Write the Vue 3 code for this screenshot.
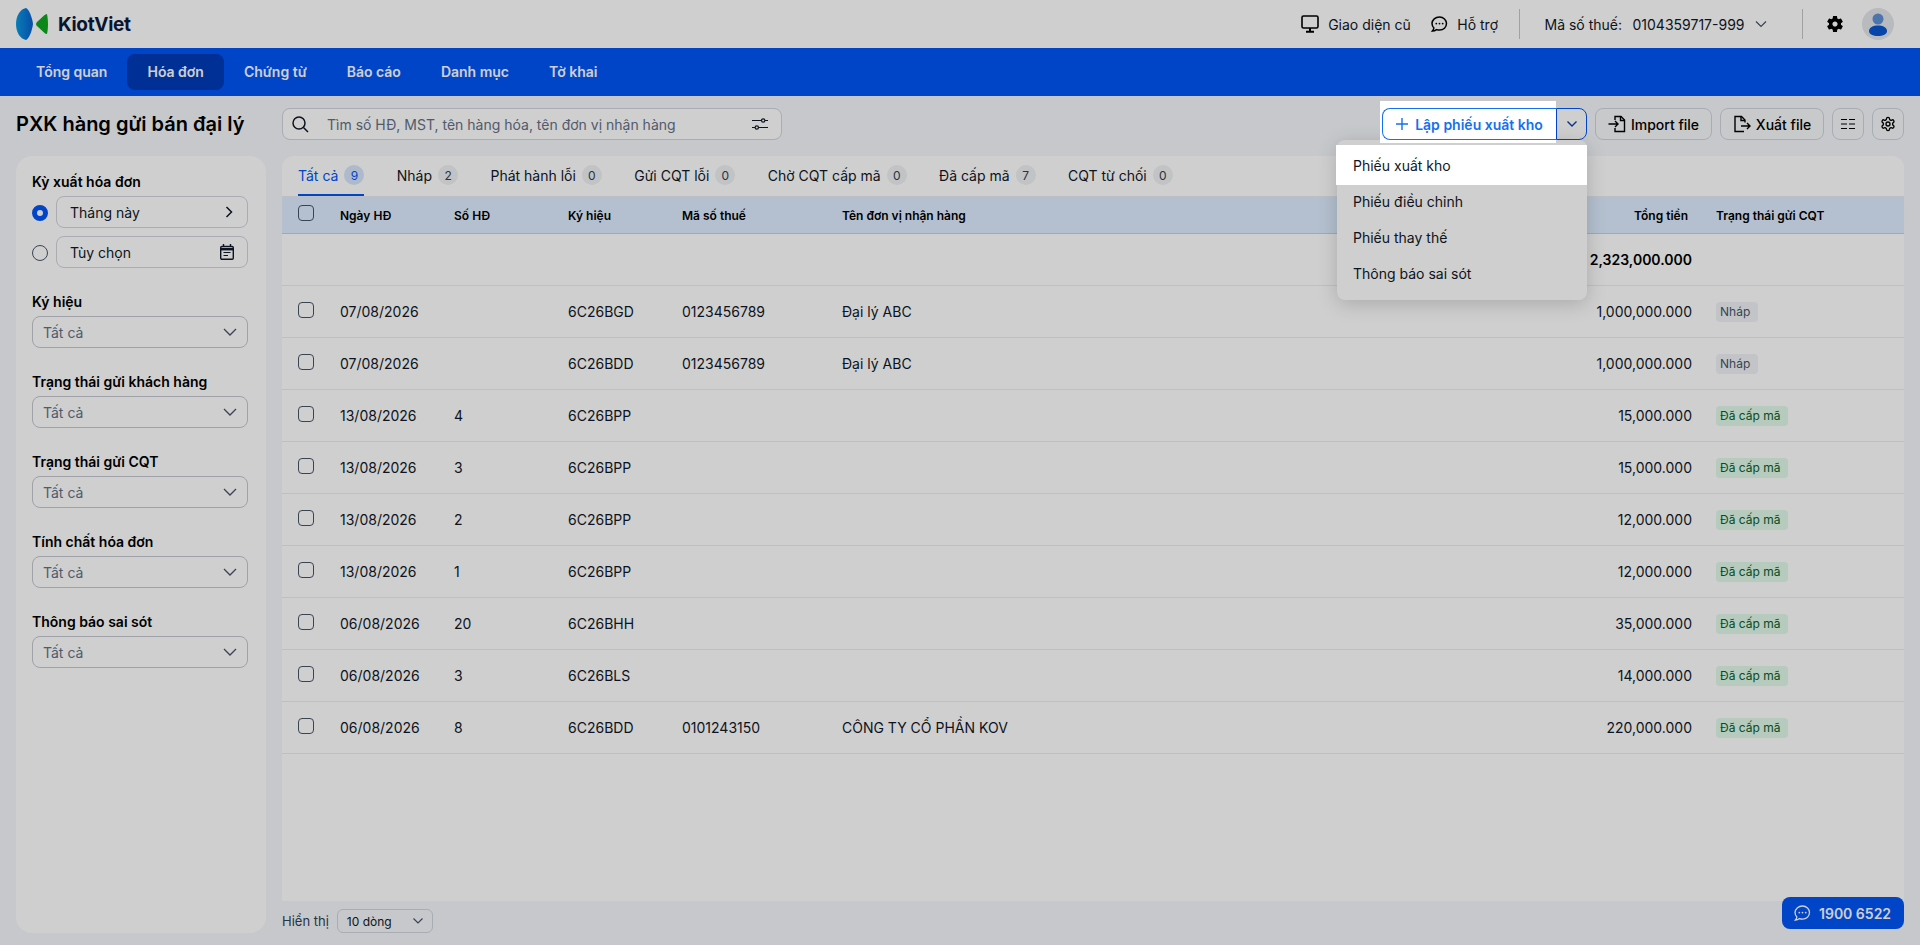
<script setup>
const navItems = ['Tổng quan', 'Hóa đơn', 'Chứng từ', 'Báo cáo', 'Danh mục', 'Tờ khai']
const tabs = [
  { label: 'Tất cả', count: 9, active: true },
  { label: 'Nháp', count: 2 },
  { label: 'Phát hành lỗi', count: 0 },
  { label: 'Gửi CQT lỗi', count: 0 },
  { label: 'Chờ CQT cấp mã', count: 0 },
  { label: 'Đã cấp mã', count: 7 },
  { label: 'CQT từ chối', count: 0 }
]
const filters = ['Ký hiệu', 'Trạng thái gửi khách hàng', 'Trạng thái gửi CQT', 'Tính chất hóa đơn', 'Thông báo sai sót']
const rows = [
  { date: '07/08/2026', no: '', sym: '6C26BGD', tax: '0123456789', name: 'Đại lý ABC', total: '1,000,000.000', status: 'Nháp' },
  { date: '07/08/2026', no: '', sym: '6C26BDD', tax: '0123456789', name: 'Đại lý ABC', total: '1,000,000.000', status: 'Nháp' },
  { date: '13/08/2026', no: '4', sym: '6C26BPP', tax: '', name: '', total: '15,000.000', status: 'Đã cấp mã' },
  { date: '13/08/2026', no: '3', sym: '6C26BPP', tax: '', name: '', total: '15,000.000', status: 'Đã cấp mã' },
  { date: '13/08/2026', no: '2', sym: '6C26BPP', tax: '', name: '', total: '12,000.000', status: 'Đã cấp mã' },
  { date: '13/08/2026', no: '1', sym: '6C26BPP', tax: '', name: '', total: '12,000.000', status: 'Đã cấp mã' },
  { date: '06/08/2026', no: '20', sym: '6C26BHH', tax: '', name: '', total: '35,000.000', status: 'Đã cấp mã' },
  { date: '06/08/2026', no: '3', sym: '6C26BLS', tax: '', name: '', total: '14,000.000', status: 'Đã cấp mã' },
  { date: '06/08/2026', no: '8', sym: '6C26BDD', tax: '0101243150', name: 'CÔNG TY CỔ PHẦN KOV', total: '220,000.000', status: 'Đã cấp mã' }
]
const menu = ['Phiếu xuất kho', 'Phiếu điều chỉnh', 'Phiếu thay thế', 'Thông báo sai sót']
</script>

<template>
  <div class="app">
    <header class="top">
      <div class="brand">
        <svg class="logo" width="34" height="32" viewBox="0 0 34 32">
          <defs>
            <linearGradient id="lg" x1="0" y1="0" x2="1" y2="0">
              <stop offset="0" stop-color="#0a9be0" />
              <stop offset="1" stop-color="#0a5fd0" />
            </linearGradient>
          </defs>
          <path d="M10 0C4 1 0 8 0 16s4 15 10 16c3-1 6-9 7-16C16 9 13 1 10 0z" fill="url(#lg)" />
          <path d="M31 6c-1 0-2 .5-3 1.500l-7 6.500c-1.200 1.100-1.200 3 0 4.100l7 6.500c1 1 2 1.500 3 1.500 .6-2.500 1-6 1-9.500S31.600 8.500 31 6z" fill="#0fa81e" />
        </svg>
        <span class="brand-name">KiotViet</span>
      </div>
      <div class="top-right">
        <a class="top-link">
          <svg width="18" height="18" viewBox="0 0 18 18" fill="none" stroke="#000" stroke-width="1.600"><rect x="1" y="1" width="16" height="12" rx="1.500" /><path d="M9 13v3.500M5 16.800h8" stroke-width="2" /></svg>
          Giao diện cũ
        </a>
        <a class="top-link second">
          <svg width="18" height="18" viewBox="0 0 18 18" fill="none" stroke="#000" stroke-width="1.500"><path d="M9.500 2C5.400 2 2 4.900 2 8.600c0 1.700.7 3.200 1.900 4.400-.2 1.200-.8 2.200-1.500 3 1.700 0 3.100-.6 4.100-1.400.9.300 1.900.5 3 .5 4 0 7-2.900 7-6.500S13.500 2 9.500 2z" /><circle cx="6.300" cy="8.600" r=".9" fill="#000" stroke="none" /><circle cx="9.500" cy="8.600" r=".9" fill="#000" stroke="none" /><circle cx="12.700" cy="8.600" r=".9" fill="#000" stroke="none" /></svg>
          Hỗ trợ
        </a>
        <span class="vline"></span>
        <span class="tax-label">Mã số thuế:</span>
        <span class="tax-value">0104359717-999</span>
        <svg class="tax-chev" width="12" height="8" viewBox="0 0 12 8" fill="none" stroke="#475467" stroke-width="1.200"><path d="M1 1.500l5 5 5-5" /></svg>
        <span class="vline v2"></span>
        <svg class="cog" width="20" height="20" viewBox="0 0 24 24" fill="#000"><path d="M19.140 12.940c.04-.3.06-.61.06-.94 0-.32-.02-.64-.07-.94l2.030-1.580c.18-.14.23-.41.12-.61l-1.920-3.320c-.12-.22-.37-.29-.59-.22l-2.390.96c-.5-.38-1.030-.7-1.620-.94l-.36-2.540c-.04-.24-.24-.41-.48-.41h-3.840c-.24 0-.43.17-.47.41l-.36 2.540c-.59.24-1.130.57-1.620.94l-2.390-.96c-.22-.08-.47 0-.59.22L2.740 8.870c-.12.21-.08.47.12.61l2.030 1.580c-.05.3-.09.63-.09.94s.02.64.07.94l-2.030 1.580c-.18.14-.23.41-.12.61l1.920 3.320c.12.22.37.29.59.22l2.390-.96c.5.38 1.030.7 1.620.94l.36 2.540c.05.24.24.41.48.41h3.840c.24 0 .44-.17.47-.41l.36-2.540c.59-.24 1.130-.56 1.620-.94l2.390.96c.22.08.47 0 .59-.22l1.920-3.320c.12-.22.07-.47-.12-.61l-2.010-1.580zM12 15.100c-1.710 0-3.100-1.390-3.100-3.100s1.390-3.100 3.100-3.100 3.100 1.390 3.100 3.100-1.390 3.100-3.100 3.100z" /></svg>
        <span class="avatar">
          <svg width="20" height="24" viewBox="0 0 20 24"><circle cx="10" cy="7" r="5.500" fill="#5f8fd6" /><path d="M1 19c0-3.500 4-5.500 9-5.500s9 2 9 5.500-4 5-9 5-9-1.500-9-5z" fill="#0a55d0" /></svg>
        </span>
      </div>
    </header>

    <nav class="nav">
      <a v-for="(n, i) in navItems" :key="n" class="nav-item" :class="{ on: i === 1 }">{{ n }}</a>
    </nav>

    <section class="toolbar">
      <h1 class="title">PXK hàng gửi bán đại lý</h1>
      <div class="search">
        <svg width="18" height="18" viewBox="0 0 18 18" fill="none" stroke="#101828" stroke-width="1.500"><circle cx="8" cy="8" r="6" /><path d="M12.500 12.500L17 17" /></svg>
        <span class="ph">Tìm số HĐ, MST, tên hàng hóa, tên đơn vị nhận hàng</span>
        <svg class="tune" width="16" height="14" viewBox="0 0 16 14" fill="none" stroke="#101828" stroke-width="1.200"><path d="M0 3.500h9.500M13 3.500h3M0 10.500h3M6.500 10.500H16" /><circle cx="11.200" cy="3.500" r="1.700" /><circle cx="4.800" cy="10.500" r="1.700" /></svg>
      </div>
      <div class="actions">
        <div class="spot">
          <button class="btn-main">
            <svg width="12" height="12" viewBox="0 0 12 12" stroke="#1570ef" stroke-width="1.400"><path d="M6 0v12M0 6h12" /></svg>
            Lập phiếu xuất kho
          </button>
        </div>
        <button class="btn-drop">
          <svg width="12" height="8" viewBox="0 0 12 8" fill="none" stroke="#0a3f9e" stroke-width="1.400"><path d="M1.500 1.500L6 6l4.500-4.500" /></svg>
        </button>
        <button class="btn import">
          <svg width="18" height="18" viewBox="0 0 18 18" fill="none" stroke="#000" stroke-width="1.400"><path d="M7 5V1.500h6l3.500 3.500v11.500H7V13" /><path d="M0.500 9h9M7 6l3 3-3 3" /><path d="M12.500 1.500V5.500h4" /></svg>
          Import file
        </button>
        <button class="btn export">
          <svg width="18" height="18" viewBox="0 0 18 18" fill="none" stroke="#000" stroke-width="1.400"><path d="M11 16.500H2V1.500h6.500L12 5v2.500" /><path d="M8 1.500V5.500h4" /><path d="M8 11h9M14 8l3 3-3 3" /></svg>
          Xuất file
        </button>
        <button class="btn square">
          <svg width="14" height="10" viewBox="0 0 14 10" stroke="#000" stroke-width="1.100"><path d="M0 .5h6M8 .5h6M0 5h6M8 5h6M0 9.500h6M8 9.500h6" /></svg>
        </button>
        <button class="btn square last">
          <svg width="16" height="16" viewBox="0 0 24 24" fill="none" stroke="#000" stroke-width="2"><path d="M12.220 2h-.44a2 2 0 0 0-2 2v.18a2 2 0 0 1-1 1.730l-.43.25a2 2 0 0 1-2 0l-.15-.08a2 2 0 0 0-2.730.730l-.22.380a2 2 0 0 0 .73 2.730l.15.100a2 2 0 0 1 1 1.720v.510a2 2 0 0 1-1 1.740l-.15.090a2 2 0 0 0-.73 2.730l.22.380a2 2 0 0 0 2.730.730l.15-.08a2 2 0 0 1 2 0l.43.250a2 2 0 0 1 1 1.730V20a2 2 0 0 0 2 2h.44a2 2 0 0 0 2-2v-.18a2 2 0 0 1 1-1.730l.43-.25a2 2 0 0 1 2 0l.15.08a2 2 0 0 0 2.730-.73l.22-.39a2 2 0 0 0-.73-2.730l-.15-.08a2 2 0 0 1-1-1.740v-.5a2 2 0 0 1 1-1.740l.15-.09a2 2 0 0 0 .73-2.730l-.22-.38a2 2 0 0 0-2.730-.73l-.15.08a2 2 0 0 1-2 0l-.43-.25a2 2 0 0 1-1-1.730V4a2 2 0 0 0-2-2z" /><circle cx="12" cy="12" r="3" /></svg>
        </button>
        <ul class="menu">
          <li v-for="(m, i) in menu" :key="m" class="menu-item" :class="{ lit: i === 0 }">{{ m }}</li>
        </ul>
      </div>
    </section>

    <main class="content">
      <aside class="side">
        <div class="group">
          <label class="lbl">Kỳ xuất hóa đơn</label>
          <div class="period">
            <span class="radio on"></span>
            <div class="field">
              <span>Tháng này</span>
              <svg width="8" height="12" viewBox="0 0 8 12" fill="none" stroke="#101828" stroke-width="1.500"><path d="M1.500 1l5 5-5 5" /></svg>
            </div>
          </div>
          <div class="period">
            <span class="radio"></span>
            <div class="field">
              <span>Tùy chọn</span>
              <svg class="cal" width="14" height="16" viewBox="0 0 14 16" fill="none" stroke="#101828" stroke-width="1.400"><rect x=".7" y="2.500" width="12.600" height="12.800" rx="1.200" /><path d="M.7 5.200h12.600" stroke-width="2.400" /><path d="M3.500 0v3M10.500 0v3" /><path d="M3.500 8.500h7M3.500 11.500h4.500" stroke-width="1.100" /></svg>
            </div>
          </div>
        </div>
        <div v-for="f in filters" :key="f" class="group">
          <label class="lbl">{{ f }}</label>
          <div class="select">
            <span>Tất cả</span>
            <svg width="14" height="8" viewBox="0 0 14 8" fill="none" stroke="#475467" stroke-width="1.300"><path d="M1 1l6 6 6-6" /></svg>
          </div>
        </div>
      </aside>

      <div class="main">
        <div class="card">
          <div class="tabs">
            <a v-for="t in tabs" :key="t.label" class="tab" :class="{ on: t.active }">
              {{ t.label }}<span class="count">{{ t.count }}</span>
            </a>
          </div>
          <div class="line head">
            <span class="cell-check"><i class="check"></i></span>
            <span>Ngày HĐ</span>
            <span>Số HĐ</span>
            <span>Ký hiệu</span>
            <span>Mã số thuế</span>
            <span>Tên đơn vị nhận hàng</span>
            <span class="num">Tổng tiền</span>
            <span>Trạng thái gửi CQT</span>
          </div>
          <div class="line sum">
            <span></span><span></span><span></span><span></span><span></span><span></span>
            <span class="num">2,323,000.000</span>
            <span></span>
          </div>
          <div v-for="(r, i) in rows" :key="i" class="line row">
            <span class="cell-check"><i class="check"></i></span>
            <span>{{ r.date }}</span>
            <span>{{ r.no }}</span>
            <span>{{ r.sym }}</span>
            <span>{{ r.tax }}</span>
            <span>{{ r.name }}</span>
            <span class="num">{{ r.total }}</span>
            <span><em class="tag" :class="{ ok: r.status !== 'Nháp' }">{{ r.status }}</em></span>
          </div>
        </div>
        <div class="pager">
          <span>Hiển thị</span>
          <div class="pager-select">
            <span>10 dòng</span>
            <svg width="10" height="6" viewBox="0 0 10 6" fill="none" stroke="#475467" stroke-width="1.200"><path d="M.5.500L5 5 9.500.500" /></svg>
          </div>
        </div>
      </div>
    </main>

    <a class="hotline">
      <svg width="18" height="18" viewBox="0 0 18 18" fill="none" stroke="#fff" stroke-width="1.300"><path d="M9.500 2C5.400 2 2 4.900 2 8.600c0 1.700.7 3.200 1.900 4.400-.2 1.200-.8 2.200-1.500 3 1.700 0 3.100-.6 4.100-1.400.9.300 1.900.5 3 .5 4 0 7-2.900 7-6.500S13.500 2 9.500 2z" /><circle cx="6.300" cy="8.600" r=".9" fill="#fff" stroke="none" /><circle cx="9.500" cy="8.600" r=".9" fill="#fff" stroke="none" /><circle cx="12.700" cy="8.600" r=".9" fill="#fff" stroke="none" /></svg>
      1900 6522
    </a>

    <div class="mask"></div>
  </div>
</template>

<style>
html, body { margin: 0; }
</style>

<style scoped>
* { box-sizing: border-box; }
.app {
  position: relative;
  height: 100vh;
  display: flex;
  flex-direction: column;
  overflow: hidden;
  background: #f4f7fa;
  font-family: Inter, "Noto Sans", sans-serif;
  font-size: 14px;
  color: #101828;
}
.mask { position: absolute; inset: 0; background: rgba(0, 0, 0, .19); z-index: 10; }

.top { height: 48px; flex: none; background: #fff; display: flex; align-items: center; justify-content: space-between; padding: 0 26px 0 16px; }
.brand { display: flex; align-items: center; gap: 8px; }
.brand-name { font-size: 19px; font-weight: 700; color: #0b1a3d; letter-spacing: -.3px; }
.top-right { display: flex; align-items: center; }
.top-link { display: flex; align-items: center; gap: 9px; color: #101828; }
.top-link.second { margin-left: 19.500px; }
.vline { width: 1px; height: 30px; background: #c7c7c7; margin-left: 21px; }
.tax-label { margin-left: 24.500px; }
.tax-value { margin-left: 10.500px; }
.tax-chev { margin-left: 10px; }
.vline.v2 { margin-left: 35px; }
.cog { margin-left: 22px; }
.avatar { width: 32px; height: 32px; border-radius: 50%; background: #e3e6ea; margin-left: 17.500px; display: flex; align-items: center; justify-content: center; overflow: hidden; }

.nav { height: 48px; flex: none; background: #0054f7; display: flex; align-items: center; padding: 0 16px; }
.nav-item { padding: 0 20px; height: 36px; line-height: 36px; border-radius: 8px; color: #fff; font-weight: 600; }
.nav-item.on { background: #003ab8; }

.toolbar { flex: none; display: flex; align-items: center; padding: 12px 16px 16px; height: 60px; }
.title { margin: 0; width: 266px; flex: none; font-size: 20px; font-weight: 600; color: #000; white-space: nowrap; }
.search { width: 500px; height: 32px; border: 1px solid #d0d5dd; border-radius: 8px; display: flex; align-items: center; padding: 0 13px 0 8px; background: #fff; }
.ph { margin-left: 18px; color: #667085; flex: 1; }
.actions { margin-left: auto; display: flex; align-items: center; position: relative; }
.spot { position: relative; z-index: 20; background: #fff; padding: 7px 0 3px 2px; margin: -7px 0 -3px -2px; display: flex; }
.btn-main { height: 32px; width: 174px; border: 1px solid #1570ef; border-right: 0; border-radius: 8px 0 0 8px; background: #fff; color: #1570ef; font: 600 14px Inter, sans-serif; display: flex; align-items: center; justify-content: center; gap: 7px; padding: 0; white-space: nowrap; }
.btn-drop { width: 31px; height: 32px; border: 1px solid #0054f7; border-radius: 0 8px 8px 0; background: #fff; margin-right: 8px; display: flex; align-items: center; justify-content: center; padding: 0; }
.btn { height: 32px; border: 1px solid #d0d5dd; border-radius: 8px; background: #f7f8fa; color: #000; font: 500 14px Inter, sans-serif; display: flex; align-items: center; justify-content: center; gap: 5px; padding: 0; margin-right: 8px; white-space: nowrap; }
.btn.import { width: 117px; }
.btn.export { width: 104px; }
.btn.square { width: 32px; }
.btn.last { margin-right: 0; }
.menu { position: absolute; left: -45px; top: 32px; width: 250px; height: 160px; margin: 0; padding: 8px 0; list-style: none; background: #fff; border-radius: 8px; box-shadow: 0 4px 20px rgba(0, 0, 0, .18); }
.menu-item { height: 36px; line-height: 36px; padding: 0 16px; color: #101828; position: relative; }
.menu-item.lit { z-index: 20; }
.menu-item.lit::before { content: ""; position: absolute; inset: -3px 0 -1px -1px; background: #fff; z-index: -1; }

.content { flex: 1; min-height: 0; display: flex; gap: 16px; padding: 0 16px 12px; }
.side { width: 250px; flex: none; background: #fff; border-radius: 16px; padding: 16px 18px 16px 16px; display: flex; flex-direction: column; gap: 24px; }
.group { display: flex; flex-direction: column; gap: 4px; }
.lbl { font-size: 14px; line-height: 20px; font-weight: 600; color: #000; white-space: nowrap; }
.period { display: flex; align-items: center; gap: 8px; margin-bottom: 4px; }
.period:last-child { margin-bottom: 0; }
.radio { width: 16px; height: 16px; border: 1.300px solid #475467; border-radius: 50%; flex: none; margin-top: 2px; }
.radio.on { border: 5px solid #0054f7; background: #fff; }
.field { flex: 1; height: 32px; border: 1px solid #d0d5dd; border-radius: 8px; display: flex; align-items: center; justify-content: space-between; padding: 0 14px 0 13px; color: #101828; }
.field .cal { margin-right: -1px; }
.select { height: 32px; border: 1px solid #c4c8cf; border-radius: 8px; display: flex; align-items: center; justify-content: space-between; padding: 0 10px; color: #667085; }

.main { flex: 1; min-width: 0; display: flex; flex-direction: column; }
.card { flex: 1; background: #fff; border-radius: 12px 12px 0 0; overflow: hidden; }
.tabs { height: 41px; display: flex; padding: 0 16px; gap: 32.400px; border-bottom: 1px solid #eaecf0; }
.tab { height: 40px; display: flex; align-items: center; gap: 6px; color: #101828; border-bottom: 2px solid transparent; }
.tab.on { color: #0054f7; border-bottom-color: #0054f7; }
.count { width: 20px; height: 20px; border-radius: 50%; background: #eef0f3; color: #344054; font-size: 12px; display: flex; align-items: center; justify-content: center; }
.tab.on .count { background: #d7e6fa; color: #0054f7; }

.line { display: grid; grid-template-columns: 58px 114px 114px 114px 160px 500px 1fr 188px; align-items: center; }
.head { height: 37px; background: #deedff; border-bottom: 1px solid #bcd3ef; font-size: 12px; font-weight: 600; color: #000; }
.row, .sum { height: 52px; border-bottom: 1px solid #eaecf0; }
.num { text-align: right; padding-right: 24px; }
.head .num { padding-right: 28px; }
.sum .num { font-weight: 600; color: #000; }
.cell-check { padding-left: 16px; display: flex; margin-top: -4px; }
.check { width: 16px; height: 16px; border: 1.300px solid #475467; border-radius: 4px; display: block; }
.tag { display: inline-block; font-style: normal; height: 20px; line-height: 20px; padding: 0 8px 0 4px; border-radius: 4px; font-size: 12px; background: #f0f2f6; color: #475467; }
.tag.ok { background: #e1f9e9; color: #07602a; }

.pager { flex: none; height: 24px; margin-top: 8px; display: flex; align-items: center; gap: 8px; font-size: 13px; color: #344054; }
.pager-select { width: 96px; height: 24px; border: 1px solid #d0d5dd; border-radius: 6px; display: flex; align-items: center; justify-content: space-between; padding: 0 9px; font-size: 12px; color: #101828; }

.hotline { position: absolute; right: 16px; bottom: 16px; width: 122px; height: 32px; background: #0054f7; color: #fff; border-radius: 8px; display: flex; align-items: center; gap: 8px; padding-left: 11px; font-weight: 600; font-size: 14px; }
</style>
